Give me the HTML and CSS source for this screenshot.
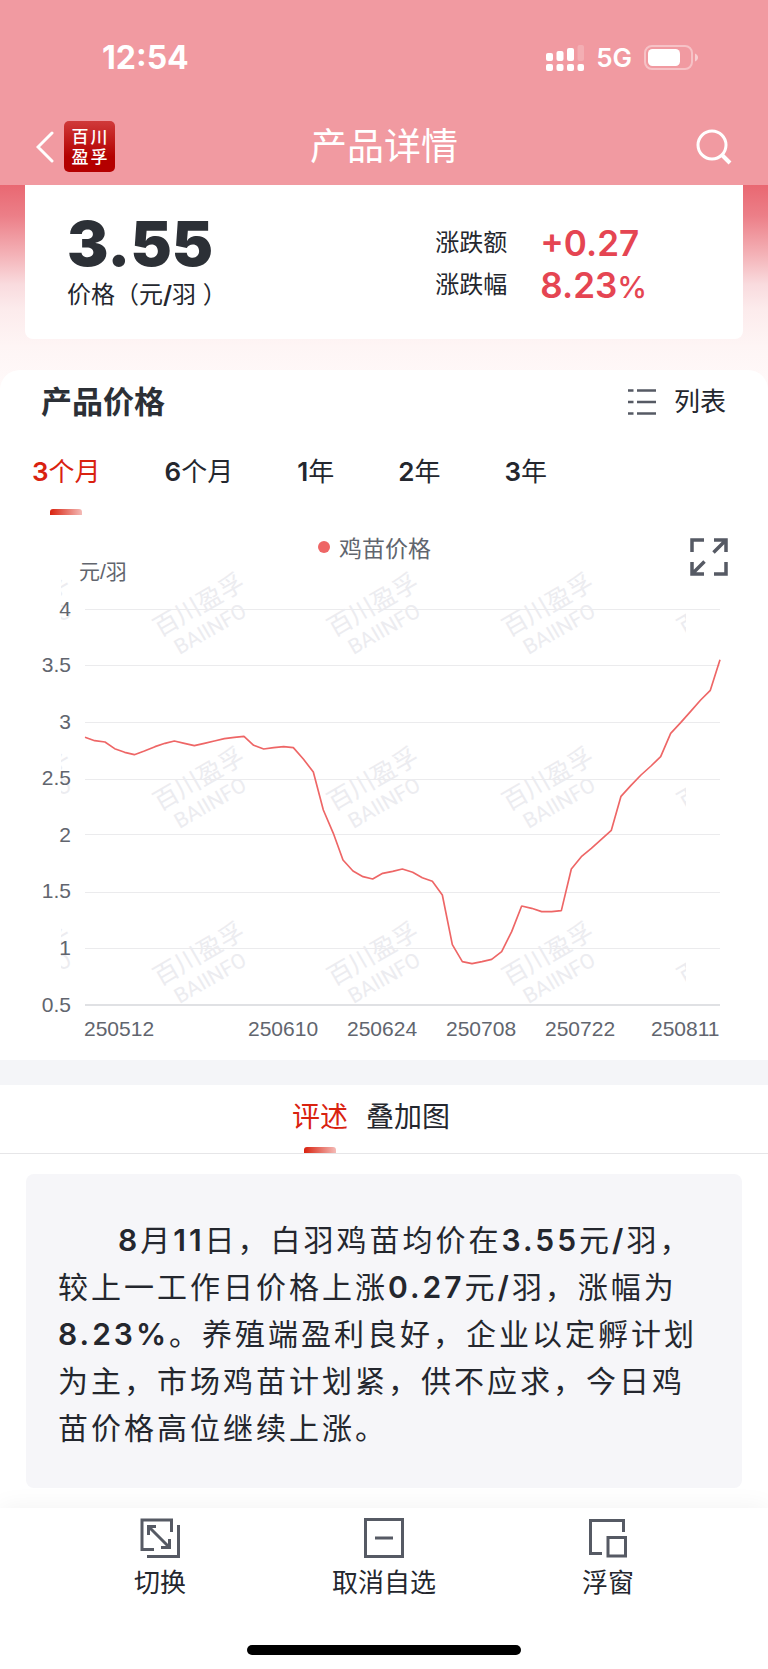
FILE: index.html
```html
<!DOCTYPE html>
<html lang="zh-CN">
<head>
<meta charset="utf-8">
<meta name="viewport" content="width=device-width, initial-scale=1">
<title>产品详情</title>
<link rel="stylesheet" href="styles.css">
</head>
<body>
<div class="app">
  <header class="header">
    <div class="status">
      <span class="status-time">12:54</span>
      <div class="status-icons">
        <svg width="38" height="28" viewBox="0 0 38 28" fill="#fff" aria-hidden="true">
          <rect x="0" y="9" width="7" height="8" rx="2"/><rect x="10.500" y="7" width="7" height="10" rx="2"/><rect x="21" y="4" width="7" height="13" rx="2"/><rect x="31.500" y="1" width="6.500" height="16" rx="2" opacity=".2"/>
          <rect x="0" y="20" width="7" height="7" rx="2"/><rect x="10.500" y="20" width="7" height="7" rx="2"/><rect x="21" y="20" width="7" height="7" rx="2"/><rect x="31.500" y="20" width="6.500" height="7" rx="2"/>
        </svg>
        <span class="status-net">5G</span>
        <svg width="54" height="26" viewBox="0 0 54 26" aria-hidden="true">
          <rect x="1" y="1" width="47" height="23" rx="7" fill="none" stroke="#fff" stroke-width="2" opacity=".4"/>
          <rect x="4" y="4" width="32" height="17" rx="4.500" fill="#fff"/>
          <path d="M51 8.500c4 1.500 4 6.500 0 8z" fill="#fff" opacity=".5"/>
        </svg>
      </div>
    </div>
    <nav class="navbar">
      <div class="nav-left">
        <button class="icon-btn" type="button" aria-label="返回">
          <svg width="18" height="32" viewBox="0 0 18 32" fill="none" stroke="#fff" stroke-width="3" stroke-linecap="round"><path d="M16 2 2 16 16 30"/></svg>
        </button>
        <div class="logo"><span>百</span><span>川</span><span>盈</span><span>孚</span></div>
      </div>
      <h1 class="nav-title">产品详情</h1>
      <button class="icon-btn nav-search" type="button" aria-label="搜索">
        <svg width="36" height="36" viewBox="0 0 36 36" fill="none" stroke="#fff" stroke-width="3"><circle cx="16" cy="16" r="14"/><path d="m25.500 25.500 8.500 8.500" stroke-width="4"/></svg>
      </button>
    </nav>
  </header>

  <section class="hero">
    <div class="price-card">
      <div>
        <div class="price">3.55</div>
        <div class="price-unit">价格（元<b>/</b>羽 ）</div>
      </div>
      <dl class="changes">
        <dt>涨跌额</dt><dd>+0.27</dd>
        <dt>涨跌幅</dt><dd>8.23<span class="pct">%</span></dd>
      </dl>
    </div>
  </section>

  <section class="sheet">
    <div class="sheet-head">
      <h2 class="sheet-title">产品价格</h2>
      <button class="list-btn" type="button">
        <svg width="28" height="28" viewBox="0 0 28 28" stroke="#565a64" stroke-width="2.500" aria-hidden="true"><path d="M0 2.500h5.500M9 2.500h19M0 14h5.500M9 14h19M0 25.500h5.500M9 25.500h19"/></svg>
        列表
      </button>
    </div>
    <div class="ranges">
      <button class="range active" type="button"><span><b>3</b>个月</span></button>
      <button class="range" type="button"><span><b>6</b>个月</span></button>
      <button class="range" type="button"><span><b>1</b>年</span></button>
      <button class="range" type="button"><span><b>2</b>年</span></button>
      <button class="range" type="button"><span><b>3</b>年</span></button>
    </div>
    <div class="chart-head">
      <span class="axis-name">元/羽</span>
      <span class="legend"><i class="dot"></i>鸡苗价格</span>
      <button class="icon-btn expand" type="button" aria-label="全屏">
        <svg width="38" height="38" viewBox="0 0 38 38" fill="none" stroke="#565a64" stroke-width="3.500"><path d="M14 2H2v12M24 2h12v12M36 2 23.500 14.500M2 24v12h12M2 36l12.500-12.500M36 24v12H24"/></svg>
      </button>
    </div>
    <svg class="chart" viewBox="0 0 768 480" role="img" aria-label="鸡苗价格走势">
      <defs>
        <clipPath id="wm-clip"><rect x="61" y="-30" width="625" height="480"/></clipPath>
      </defs>
      <path class="grid" d="M85 29.500h635M85 85.500h635M85 142.500h635M85 199.500h635M85 254.500h635M85 312.500h635M85 368.500h635"/>
      <path class="axis" d="M85 425h635"/>
      <g class="wm" clip-path="url(#wm-clip)" text-anchor="middle">
        <g transform="translate(30 36) rotate(-30)"><text y="-4">百川盈孚</text><text class="wm-en" x="-2" y="21">BAIINFO</text></g>
        <g transform="translate(205 36) rotate(-30)"><text y="-4">百川盈孚</text><text class="wm-en" x="-2" y="21">BAIINFO</text></g>
        <g transform="translate(379 36) rotate(-30)"><text y="-4">百川盈孚</text><text class="wm-en" x="-2" y="21">BAIINFO</text></g>
        <g transform="translate(554 36) rotate(-30)"><text y="-4">百川盈孚</text><text class="wm-en" x="-2" y="21">BAIINFO</text></g>
        <g transform="translate(729 36) rotate(-30)"><text y="-4">百川盈孚</text></g>
        <g transform="translate(30 210) rotate(-30)"><text y="-4">百川盈孚</text><text class="wm-en" x="-2" y="21">BAIINFO</text></g>
        <g transform="translate(205 210) rotate(-30)"><text y="-4">百川盈孚</text><text class="wm-en" x="-2" y="21">BAIINFO</text></g>
        <g transform="translate(379 210) rotate(-30)"><text y="-4">百川盈孚</text><text class="wm-en" x="-2" y="21">BAIINFO</text></g>
        <g transform="translate(554 210) rotate(-30)"><text y="-4">百川盈孚</text><text class="wm-en" x="-2" y="21">BAIINFO</text></g>
        <g transform="translate(729 210) rotate(-30)"><text y="-4">百川盈孚</text></g>
        <g transform="translate(30 385) rotate(-30)"><text y="-4">百川盈孚</text><text class="wm-en" x="-2" y="21">BAIINFO</text></g>
        <g transform="translate(205 385) rotate(-30)"><text y="-4">百川盈孚</text><text class="wm-en" x="-2" y="21">BAIINFO</text></g>
        <g transform="translate(379 385) rotate(-30)"><text y="-4">百川盈孚</text><text class="wm-en" x="-2" y="21">BAIINFO</text></g>
        <g transform="translate(554 385) rotate(-30)"><text y="-4">百川盈孚</text><text class="wm-en" x="-2" y="21">BAIINFO</text></g>
        <g transform="translate(729 385) rotate(-30)"><text y="-4">百川盈孚</text></g>
      </g>
      <g class="labels" text-anchor="end">
        <text x="71" y="36">4</text><text x="71" y="92">3.5</text><text x="71" y="149">3</text><text x="71" y="205">2.5</text><text x="71" y="262">2</text><text x="71" y="318">1.5</text><text x="71" y="375">1</text><text x="71" y="432">0.5</text>
      </g>
      <g class="labels">
        <text x="84" y="456">250512</text><text x="248" y="456">250610</text><text x="347" y="456">250624</text><text x="446" y="456">250708</text><text x="545" y="456">250722</text><text x="651" y="456">250811</text>
      </g>
      <polyline class="line" transform="translate(0 40) scale(.33333)" points="255,352 284,362 315,366 344,386 374,397 403,404 433,393 465,380 495,370 523,363 553,370 583,377 613,370 643,363 673,356 703,352 732,349 761,376 791,387 821,383 851,380 880,383 910,417 940,456 970,570 1000,640 1029,720 1059,753 1089,770 1118,777 1148,760 1178,754 1207,747 1238,757 1267,773 1297,784 1327,825 1357,974 1387,1025 1416,1031 1446,1025 1475,1018 1505,995 1535,935 1565,858 1595,865 1625,875 1655,875 1684,872 1714,747 1744,710 1774,685 1804,658 1834,631 1863,529 1893,496 1923,465 1953,438 1982,410 2012,340 2042,308 2072,274 2102,240 2131,211 2160,119"/>
    </svg>
  </section>

  <section class="review">
    <div class="review-tabs">
      <button class="review-tab active" type="button">评述</button>
      <button class="review-tab" type="button">叠加图</button>
    </div>
    <p class="comment"><b>8</b>月<b>11</b>日，白羽鸡苗均价在<b>3.55</b>元<b>/</b>羽，较上一工作日价格上涨<b>0.27</b>元<b>/</b>羽，涨幅为<b>8.23%</b>。养殖端盈利良好，企业以定孵计划为主，市场鸡苗计划紧，供不应求，今日鸡苗价格高位继续上涨。</p>
  </section>

  <footer class="bottom">
    <div class="actions">
      <button class="action" type="button">
        <svg width="40" height="40" viewBox="0 0 40 40" aria-hidden="true"><path d="M31.500 14V2H2v29.500h12M38.500 7v31.500H7M9 9l20 20M16 8.500H8.500V17M29.500 21v8.500H21"/></svg>
        切换
      </button>
      <button class="action" type="button">
        <svg width="40" height="40" viewBox="0 0 40 40" aria-hidden="true"><path d="M1.500 1.500h37v37h-37zM11 20h18"/></svg>
        取消自选
      </button>
      <button class="action" type="button">
        <svg width="40" height="40" viewBox="0 0 40 40" aria-hidden="true"><path d="M35.500 14V2.500H2.500v33H14M20 19.500h17.500V38H20z"/></svg>
        浮窗
      </button>
    </div>
    <div class="home-bar"></div>
  </footer>
</div>
</body>
</html>
```
FILE: styles.css
```css
* { box-sizing: border-box; }
body {
  margin: 0;
  background: #fff;
  color: #24272e;
  font-family: Inter, "Noto Sans CJK SC", sans-serif;
}
h1, h2, p, dl, dd { margin: 0; }
b { font-weight: 600; }
button {
  margin: 0;
  padding: 0;
  border: 0;
  background: none;
  color: inherit;
  font: inherit;
}
svg { display: block; flex: none; }

.header { background: #f19aa1; color: #fff; }
.status {
  display: flex;
  align-items: center;
  justify-content: space-between;
  height: 108px;
  padding: 7px 70px 0 102px;
}
.status-time { font-size: 32px; font-weight: 700; }
.status-icons { display: flex; align-items: center; gap: 12px; }
.status-net { font-size: 26px; font-weight: 600; line-height: 26px; }
.navbar {
  display: grid;
  grid-template-columns: 1fr auto 1fr;
  align-items: center;
  height: 77px;
  padding: 0 36px;
}
.nav-left { display: flex; align-items: center; gap: 10px; }
.nav-title { font-size: 37px; line-height: 40px; font-weight: 400; }
.nav-search { justify-self: end; }
.logo {
  display: grid;
  grid-template-columns: auto auto;
  place-content: center;
  column-gap: 2px;
  width: 51px;
  height: 51px;
  border-radius: 5px;
  background: linear-gradient(#d03a3a, #b40000 70%);
  font-size: 17px;
  line-height: 20px;
  font-weight: 500;
}

.hero {
  height: 207px;
  padding: 0 25px;
  background: linear-gradient(#e96872, #ec7f88 15%, #f4b3b8 34%, #f9dbde 48%, #fcebec 60%, #fef5f5 78%, #fffafa);
}
.price-card {
  display: flex;
  justify-content: space-between;
  height: 154px;
  padding: 23px 96px 0 42px;
  border-radius: 0 0 8px 8px;
  background: #fff;
}
.price { color: #2c3036; font-size: 62px; line-height: 72px; font-weight: 900; }
.price-unit { font-size: 24px; line-height: 30px; }
.changes {
  display: grid;
  grid-template-columns: auto auto;
  align-content: start;
  column-gap: 33px;
  padding-top: 14px;
  font-size: 24px;
  line-height: 42px;
}
.changes dd { color: #e54552; font-size: 35px; font-weight: 600; }
.pct { font-size: 30px; font-weight: 500; }

.sheet {
  margin-top: -22px;
  border-radius: 20px 20px 0 0;
  background: #fff;
}
.sheet-head {
  display: flex;
  align-items: center;
  justify-content: space-between;
  height: 64px;
  padding: 0 42px 0 41px;
}
.sheet-title { color: #2c3036; font-size: 31px; line-height: 40px; font-weight: 700; }
.list-btn { display: flex; align-items: center; gap: 18px; font-size: 26px; line-height: 36px; }
.ranges { display: flex; gap: 64px; height: 82px; padding-left: 32px; }
.range {
  display: flex;
  flex-direction: column;
  align-items: center;
  gap: 18px;
  padding-top: 19px;
  font-size: 26px;
  line-height: 38px;
}
.range.active, .review-tab.active { color: #d9220f; }
.range.active::after, .review-tab.active::after {
  content: "";
  width: 32px;
  height: 6px;
  border-radius: 3px 3px 0 0;
  background: linear-gradient(90deg, #d9220f, #f4bbb7);
}
.chart-head {
  display: grid;
  grid-template-columns: 1fr auto 1fr;
  height: 64px;
  padding: 20px 40px 0 79px;
  color: #61656e;
}
.axis-name {
  align-self: end;
  font-family: "Liberation Sans", "Noto Sans CJK SC", sans-serif;
  font-size: 21px;
  line-height: 16px;
}
.legend {
  display: flex;
  align-items: center;
  gap: 9px;
  height: 22px;
  margin-right: 58px;
  font-size: 23px;
}
.dot { width: 12px; height: 12px; border-radius: 50%; background: #ee6666; }
.expand { justify-self: end; align-self: start; padding-top: 2px; }
.chart { width: 100%; overflow: visible; }
.grid { stroke: #ebebed; fill: none; }
.axis { stroke: #e0e1e4; stroke-width: 2; }
.wm { fill: #ececf0; font-family: Roboto, "Noto Sans CJK SC", sans-serif; font-size: 25px; }
.wm-en { font-size: 21px; }
.labels { fill: #61656e; font-family: "Liberation Sans", sans-serif; font-size: 21px; }
.line { fill: none; stroke: #ee6666; stroke-width: 5; stroke-linejoin: bevel; }

.review { border-top: 25px solid #f4f5f8; }
.review-tabs {
  display: flex;
  justify-content: center;
  gap: 18px;
  height: 69px;
  padding-right: 26px;
  border-bottom: 1px solid #e6e6e8;
}
.review-tab {
  display: flex;
  flex-direction: column;
  align-items: center;
  justify-content: space-between;
  padding-top: 12px;
  font-size: 28px;
  line-height: 40px;
}
.review-tab:not(.active) { justify-content: flex-start; }
.comment {
  margin: 20px 26px;
  padding: 43px 32px 36px;
  border-radius: 8px;
  background: #f6f6f9;
  font-size: 30px;
  line-height: 47px;
  letter-spacing: 3px;
  text-indent: 2em;
}

.bottom { background: #fff; box-shadow: 0 0 24px rgba(0, 0, 0, .06); }
.actions { display: flex; padding: 10px 48px 0; }
.action {
  display: flex;
  flex: 1;
  flex-direction: column;
  align-items: center;
  gap: 7px;
  font-size: 26px;
  line-height: 36px;
}
.action svg { fill: none; stroke: #565a64; stroke-width: 3; }
.home-bar {
  width: 274px;
  height: 10px;
  margin: 44px auto 0;
  border-radius: 5px;
  background: #000;
}
.bottom::after { content: ""; display: block; height: 13px; }
```
